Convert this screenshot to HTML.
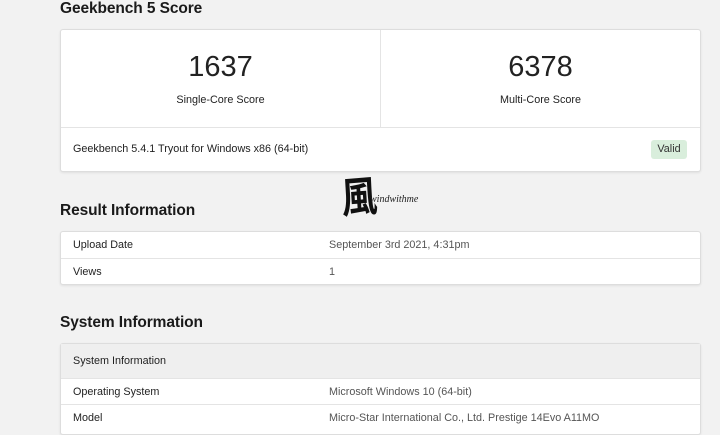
<!DOCTYPE html>
<html><head><meta charset="utf-8"><style>
body{margin:0;width:720px;height:424px;background:#f2f2f2;font-family:"Liberation Sans",Arial,sans-serif;color:#222;overflow:hidden;position:relative}
.abs{position:absolute}
h2{position:absolute;margin:0;font-size:15.5px;font-weight:bold;color:#1a1a1a;left:60px;letter-spacing:-0.1px}
.card{position:absolute;left:60px;width:639px;background:#fff;border:1px solid #ddd;border-radius:3px;box-shadow:0 1px 2px rgba(0,0,0,.08)}
.num{position:absolute;width:319px;text-align:center;font-size:29px;color:#222;top:21px}
.lbl{position:absolute;width:319px;text-align:center;font-size:10.8px;top:64px}
.row{position:absolute;left:0;width:639px;border-top:1px solid #e4e4e4;font-size:10.8px}
.row span{position:absolute;top:7px}
.k{left:12px;color:#222}.v{left:268px;color:#555}
</style></head><body>
<h2 style="top:0px">Geekbench 5 Score</h2>
<div class="card" style="top:29px;height:141px">
 <div class="abs" style="left:319px;top:0;width:1px;height:97px;background:#e4e4e4"></div>
 <div class="num" style="left:0">1637</div><div class="lbl" style="left:0">Single-Core Score</div>
 <div class="num" style="left:320px">6378</div><div class="lbl" style="left:320px">Multi-Core Score</div>
 <div class="abs" style="left:0;top:97px;width:639px;height:1px;background:#e4e4e4"></div>
 <div class="abs" style="left:12px;top:113px;font-size:10.8px">Geekbench 5.4.1 Tryout for Windows x86 (64-bit)</div>
 <div class="abs" style="left:590px;top:110px;width:36px;height:19px;background:#d9eedc;border-radius:3px;font-size:10.8px;line-height:19px;text-align:center;color:#333">Valid</div>
</div>
<div class="abs" style="left:338px;top:170px;font-family:'WenQuanYi Zen Hei','Noto Sans CJK SC',sans-serif;font-weight:bold;font-size:42px;line-height:50px;color:#111;transform:scaleX(.85) rotate(-4deg)">風</div>
<div class="abs" style="left:370px;top:194px;font-family:'Liberation Serif',serif;font-style:italic;font-size:10px">windwithme</div>
<h2 style="top:202px">Result Information</h2>
<div class="card" style="top:231px;height:52px">
 <div class="row" style="top:0;border-top:none;height:26px"><span class="k">Upload Date</span><span class="v">September 3rd 2021, 4:31pm</span></div>
 <div class="row" style="top:26px;height:26px"><span class="k">Views</span><span class="v">1</span></div>
</div>
<h2 style="top:314px">System Information</h2>
<div class="card" style="top:343px;height:90px">
 <div class="row" style="top:0;border-top:none;height:34px;background:#efefef"><span class="k" style="top:11px">System Information</span></div>
 <div class="row" style="top:34px;height:26px"><span class="k">Operating System</span><span class="v">Microsoft Windows 10 (64-bit)</span></div>
 <div class="row" style="top:60px;height:26px"><span class="k">Model</span><span class="v">Micro-Star International Co., Ltd. Prestige 14Evo A11MO</span></div>
</div>
</body></html>
